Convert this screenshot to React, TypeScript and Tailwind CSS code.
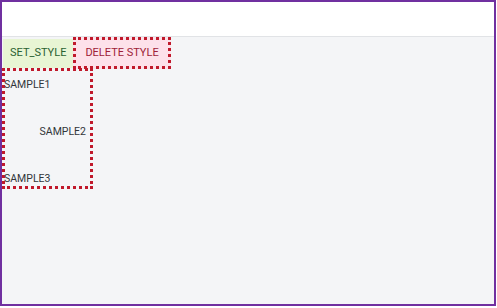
export default function App() {
  return (
    <div className="w-[497px] h-[308px] bg-white" style={{ fontFamily: 'Roboto, "Liberation Sans", Arial, sans-serif' }}>
      <div className="w-[496px] h-[306px] border-2 border-[#7030a0] flex flex-col bg-[#f4f5f7]">
        <div className="h-[35px] bg-white border-b border-[#e1e3e6] shrink-0" />
        <div className="flex flex-col items-start pl-px">
          <div className="flex items-center">
            <div className="h-[29px] px-[7px] bg-[#e8f5d4] text-[#2b6132] text-[11px] flex items-center">SET_STYLE</div>
            <div className="h-[32px] px-[9px] bg-[#fde1ea] border-[3px] border-dotted border-[#c0192b] text-[#9e2138] text-[11px] flex items-center">DELETE STYLE</div>
          </div>
          <div className="-ml-px -mt-px w-[91px] h-[121px] border-[3px] border-dotted border-[#c0192b] flex flex-col justify-between text-[10.5px] text-[#32363a] leading-none pt-[9px] pb-[2px]">
            <div className="self-start -ml-px">SAMPLE1</div>
            <div className="self-end pr-[4px]">SAMPLE2</div>
            <div className="self-start -ml-px">SAMPLE3</div>
          </div>
        </div>
      </div>
    </div>
  );
}
